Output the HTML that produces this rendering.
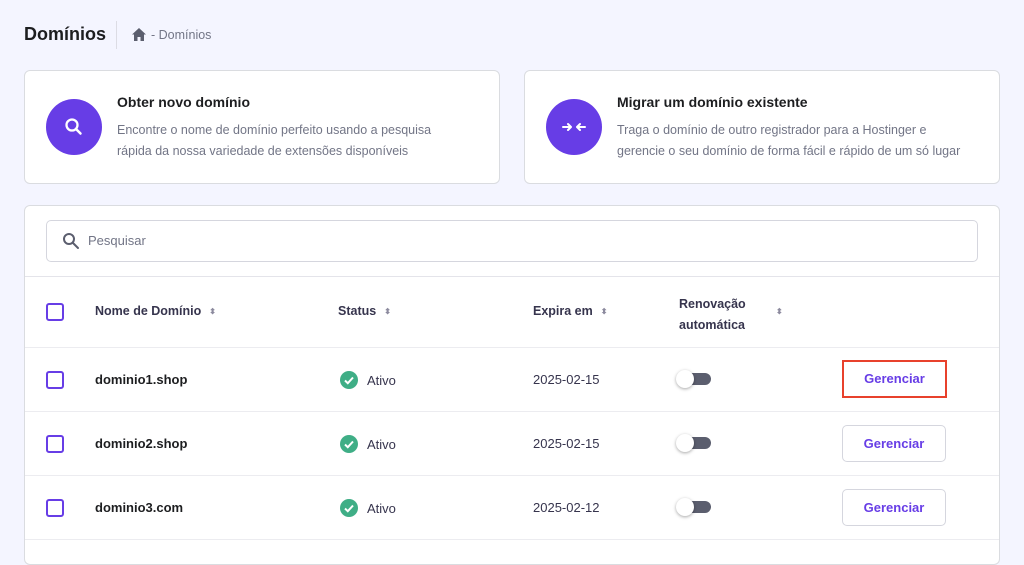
<!DOCTYPE html>
<html><head><meta charset="utf-8"><style>
*{box-sizing:border-box;margin:0;padding:0}
body{width:1024px;height:542px;overflow:hidden;background:#f4f5ff;font-family:"Liberation Sans",sans-serif;color:#2f1c6a;position:relative}
.abs{position:absolute}
h1{position:absolute;left:24px;top:24px;font-size:18px;font-weight:bold;color:#1d1e20}
.card{position:absolute;background:#fff;border:1px solid #dadce0;border-radius:6px}
.circ{position:absolute;width:56px;height:56px;border-radius:50%;background:#673de6}
.ct{position:absolute;font-size:14px;font-weight:bold;color:#1d1e20}
.cd{position:absolute;font-size:12.5px;color:#727586;line-height:21px}
.th{position:absolute;font-size:12.5px;font-weight:bold;color:#36344d}
.sort{display:inline-block;margin-left:8px;color:#8c8a9e;font-size:8px;vertical-align:1px}
.cb{position:absolute;left:46px;width:18px;height:18px;border:2px solid #673de6;border-radius:3px}
.dn{position:absolute;left:95px;font-size:13px;font-weight:bold;color:#1d1e20}
.st{position:absolute;left:340px;font-size:13px;color:#36344d}
.ok{display:inline-block;width:18px;height:18px;border-radius:50%;background:#00b090;background:#3fae86;vertical-align:-4px;margin-right:9px;position:relative}
.dt{position:absolute;left:533px;font-size:13px;color:#36344d}
.tg{position:absolute;left:678px;width:33px;height:12px;border-radius:6px;background:#5b5e6e}
.tg:before{content:"";position:absolute;left:-2px;top:-3px;width:18px;height:18px;border-radius:50%;background:#fff;box-shadow:0 1px 3px rgba(0,0,0,.35)}
.btn{position:absolute;left:842px;width:104px;height:37px;border:1px solid #d5d6de;border-radius:5px;font-size:13px;font-weight:bold;color:#673de6;text-align:center;line-height:35px;background:#fff}
.sep{position:absolute;left:25px;width:974px;height:1px;background:#ececf0}
</style></head><body>
<h1>Domínios</h1>
<div class="abs" style="left:116px;top:21px;width:1px;height:28px;background:#dcdce4"></div>
<svg class="abs" style="left:132px;top:28px" width="14" height="13" viewBox="0 0 14 13"><path d="M7 0L0 6.5h2V13h3.5V9h3v4H12V6.5h2z" fill="#5b5e6e"/></svg>
<div class="abs" style="left:151px;top:28px;font-size:12.5px;color:#727586">- Domínios</div>

<div class="card" style="left:24px;top:70px;width:476px;height:114px"></div>
<div class="circ" style="left:46px;top:99px"></div>
<svg class="abs" style="left:63px;top:116px" width="22" height="22" viewBox="0 0 22 22"><circle cx="9" cy="9" r="5.5" stroke="#fff" stroke-width="2.3" fill="none"/><path d="M13 13l4.5 4.5" stroke="#fff" stroke-width="2.5" stroke-linecap="round"/></svg>
<div class="ct" style="left:117px;top:94px">Obter novo domínio</div>
<div class="cd" style="left:117px;top:120px">Encontre o nome de domínio perfeito usando a pesquisa<br>rápida da nossa variedade de extensões disponíveis</div>

<div class="card" style="left:524px;top:70px;width:476px;height:114px"></div>
<div class="circ" style="left:546px;top:99px"></div>
<svg class="abs" style="left:561px;top:116px" width="26" height="22" viewBox="0 0 26 22"><path d="M2 11h8M7 8l3 3-3 3M24 11h-8M19 8l-3 3 3 3" stroke="#fff" stroke-width="2" fill="none" stroke-linecap="round" stroke-linejoin="round"/></svg>
<div class="ct" style="left:617px;top:94px">Migrar um domínio existente</div>
<div class="cd" style="left:617px;top:120px">Traga o domínio de outro registrador para a Hostinger e<br>gerencie o seu domínio de forma fácil e rápido de um só lugar</div>

<div class="card" style="left:24px;top:205px;width:976px;height:360px"></div>
<div class="abs" style="left:46px;top:220px;width:932px;height:42px;border:1px solid #d5d6de;border-radius:5px"></div>
<svg class="abs" style="left:62px;top:232px" width="18" height="18" viewBox="0 0 18 18"><circle cx="7" cy="7" r="5" stroke="#5b5e6e" stroke-width="2" fill="none"/><path d="M11 11l5 5" stroke="#5b5e6e" stroke-width="2" stroke-linecap="round"/></svg>
<div class="abs" style="left:88px;top:233px;font-size:13px;color:#727586">Pesquisar</div>
<div class="sep" style="top:276px;background:#e4e4ea"></div>

<div class="cb" style="top:303px"></div>
<div class="th" style="left:95px;top:304px">Nome de Domínio<span class="sort">⬍</span></div>
<div class="th" style="left:338px;top:304px">Status<span class="sort">⬍</span></div>
<div class="th" style="left:533px;top:304px">Expira em<span class="sort">⬍</span></div>
<div class="th" style="left:679px;top:294px;line-height:21px">Renovação<br>automática</div>
<div class="th" style="left:768px;top:304px"><span class="sort">⬍</span></div>
<div class="sep" style="top:347px"></div>

<div class="cb" style="top:371px"></div>
<div class="dn" style="top:372px">dominio1.shop</div>
<div class="st" style="top:371px"><span class="ok"><svg width="18" height="18" viewBox="0 0 18 18" style="position:absolute;left:0;top:0"><path d="M5 9.5l2.8 2.7L13 6.5" stroke="#fff" stroke-width="2" fill="none"/></svg></span>Ativo</div>
<div class="dt" style="top:372px">2025-02-15</div>
<div class="tg" style="top:373px"></div>
<div class="btn" style="top:360px;border:2px solid #e8412c;border-radius:0;width:105px;height:38px;left:842px;line-height:34px">Gerenciar</div>
<div class="sep" style="top:411px"></div>

<div class="cb" style="top:435px"></div>
<div class="dn" style="top:436px">dominio2.shop</div>
<div class="st" style="top:435px"><span class="ok"><svg width="18" height="18" viewBox="0 0 18 18" style="position:absolute;left:0;top:0"><path d="M5 9.5l2.8 2.7L13 6.5" stroke="#fff" stroke-width="2" fill="none"/></svg></span>Ativo</div>
<div class="dt" style="top:436px">2025-02-15</div>
<div class="tg" style="top:437px"></div>
<div class="btn" style="top:425px">Gerenciar</div>
<div class="sep" style="top:475px"></div>

<div class="cb" style="top:499px"></div>
<div class="dn" style="top:500px">dominio3.com</div>
<div class="st" style="top:499px"><span class="ok"><svg width="18" height="18" viewBox="0 0 18 18" style="position:absolute;left:0;top:0"><path d="M5 9.5l2.8 2.7L13 6.5" stroke="#fff" stroke-width="2" fill="none"/></svg></span>Ativo</div>
<div class="dt" style="top:500px">2025-02-12</div>
<div class="tg" style="top:501px"></div>
<div class="btn" style="top:489px">Gerenciar</div>
<div class="sep" style="top:539px"></div>
</body></html>
